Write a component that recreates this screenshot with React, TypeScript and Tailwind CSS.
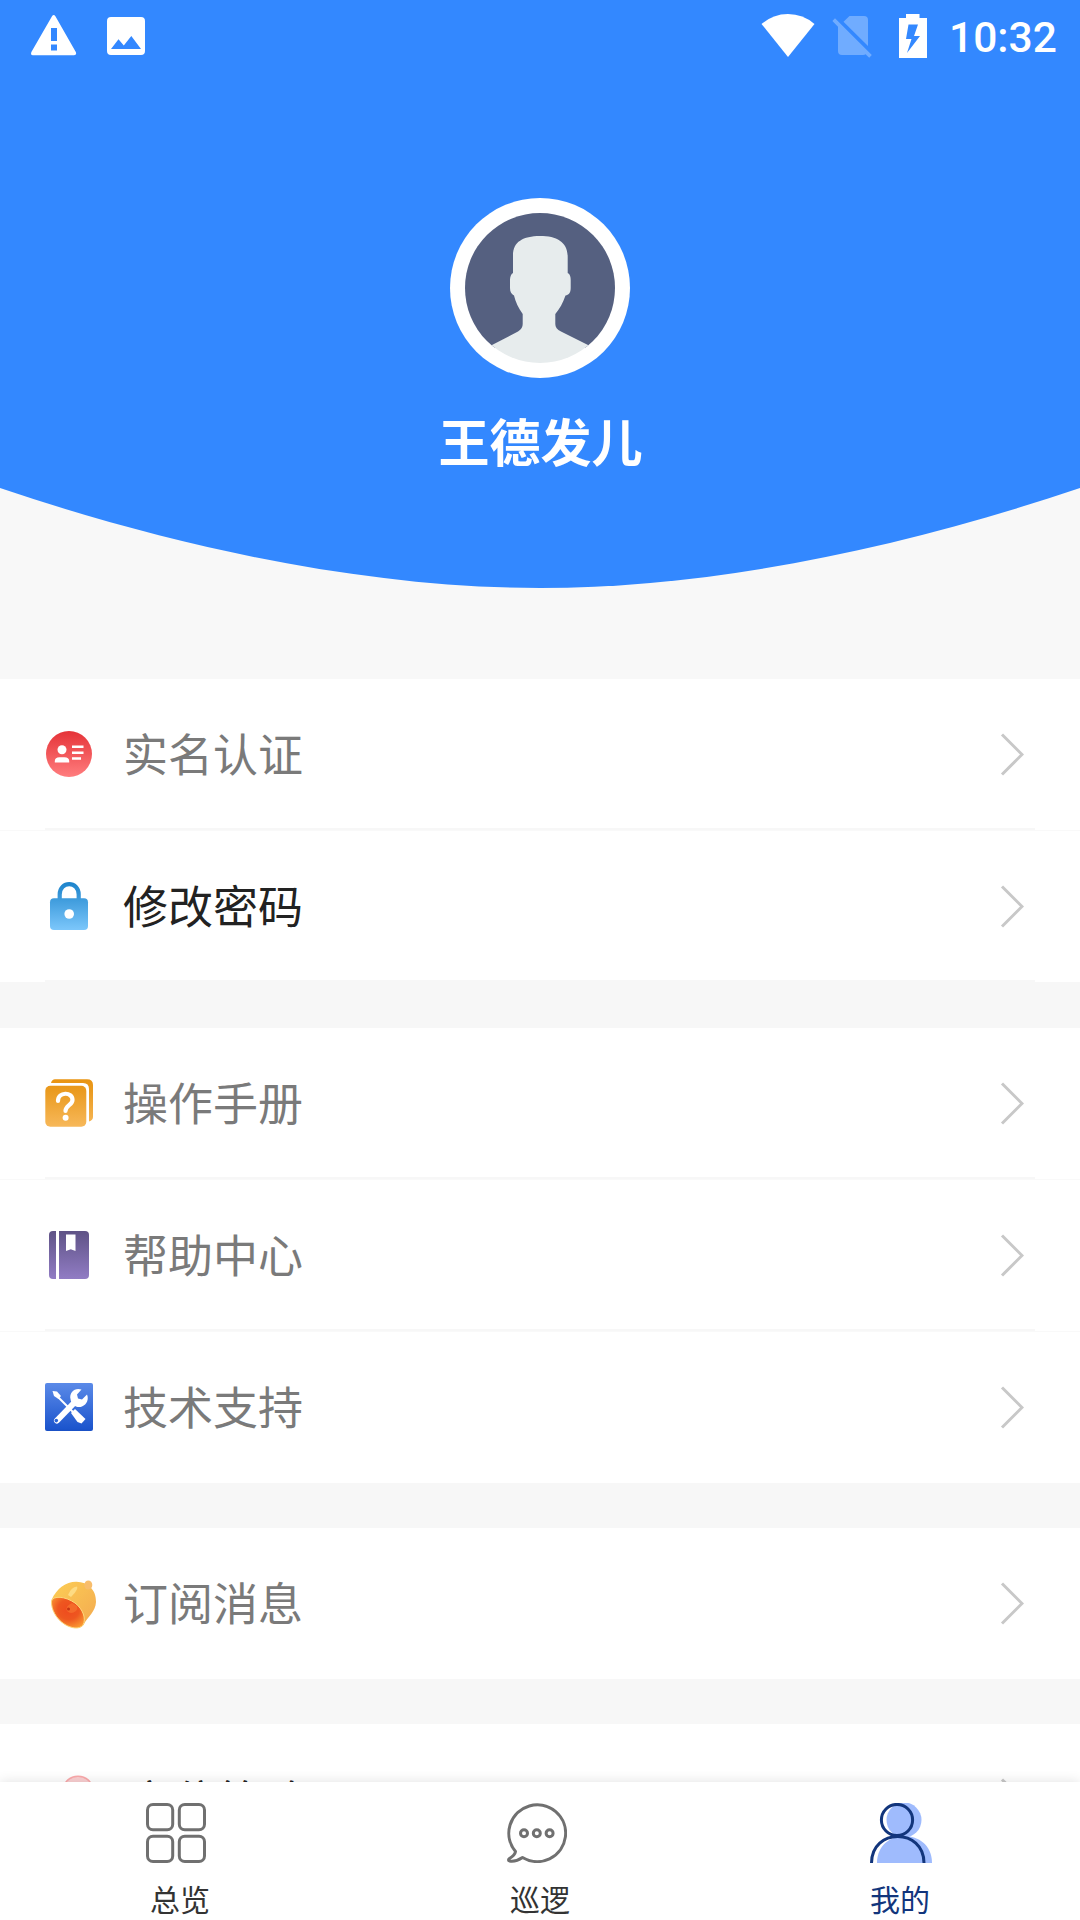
import { ReactNode } from "react"
import clsx from "clsx"

interface MenuItem {
  label: string
  icon: ReactNode
  active?: boolean
  divider?: "full" | "inner"
  shifted?: boolean
}

function StatusBar() {
  return (
    <div className="h-[72px] flex items-start text-white">
      <svg className="ml-[30px] mt-[14px] w-[48px] h-[42px]" viewBox="0 0 48 42">
        <path
          fillRule="evenodd"
          fill="#fff"
          d="M22 2.2Q23.7-.2 25.4 2.2L45.8 38Q47 41.2 44 41.2H3Q.2 41.2 1.4 38ZM21 14V27H27V14ZM21 30.5V36.5H27V30.5Z"
        />
      </svg>
      <svg className="ml-[29px] mt-[17px] w-[38px] h-[38px]" viewBox="0 0 38 38">
        <path
          fillRule="evenodd"
          fill="#fff"
          d="M4 0H34Q38 0 38 4V34Q38 38 34 38H4Q0 38 0 34V4Q0 0 4 0ZM4 32H34L24.3 19L16.8 28.5L11.5 22.3Z"
        />
      </svg>
      <svg className="ml-auto mt-[14px] w-[54px] h-[43px]" viewBox="0 0 54 43">
        <path fill="#fff" d="M.5 10Q12 0 27 0T53.5 10L27 43Z" />
      </svg>
      <svg className="ml-[17px] mt-[16px] w-[41px] h-[43px]" viewBox="0 0 41 43">
        <path
          fill="#fff"
          fillOpacity=".3"
          d="M17.5 0H32Q36 0 36 4V30L11.5 5.8ZM3 2.2L39.8 39L37.2 41.8L33.6 38.3Q33 39 31 39H10Q6 39 6 35V10.8L.4 5Z"
        />
      </svg>
      <svg className="ml-[26px] mt-[14px] w-[28px] h-[44px]" viewBox="0 0 28 44">
        <path
          fillRule="evenodd"
          fill="#fff"
          d="M7 0H20.5V4H28V44H0V4H7ZM9.5 10.5L7 25H12.5L8 39L21 22H15L19 10.5Z"
        />
      </svg>
      <span className="ml-[22px] mr-[24px] mt-[12px] w-[107px] whitespace-nowrap font-[Roboto] text-[42.5px] leading-[52px] font-medium">
        10:32
      </span>
    </div>
  )
}

function Avatar() {
  return (
    <svg className="w-[180px] h-[180px]" viewBox="0 0 180 180">
      <clipPath id="avatar-clip">
        <circle cx="90" cy="90" r="75" />
      </clipPath>
      <circle cx="90" cy="90" r="90" fill="#fff" />
      <g clipPath="url(#avatar-clip)">
        <rect width="180" height="150" fill="#556080" />
        <path
          fill="#e7eced"
          d="M90 38C107 38 117.7 44 117.7 59V75C120 76 120.7 79 120.7 82V90C120.7 95 118.5 97 115.5 97.5C113 105 109.5 111 105.3 116V126C105.3 129 107 131.5 111 133.5L138 147L150 170H30L42 147L68 133.5C71.5 131 72.7 129 72.7 126V116C68.5 110 65.5 104 64 97.5C61.5 96 60 94 60 90V82C60 79 61 76 63 75V57C63 44 73 38 90 38Z"
        />
      </g>
    </svg>
  )
}

function Chevron() {
  return (
    <svg className="w-[24px] h-[46px] ml-auto mr-[11px]" viewBox="0 0 24 46" fill="none">
      <path d="M2 3.5L22 23.5L2 43.5" stroke="#c8c8c8" strokeWidth="3" />
    </svg>
  )
}

/* Menu icons, all drawn on a 48px grid */

function IdIcon() {
  return (
    <svg className="size-12" viewBox="0 0 48 48">
      <linearGradient id="id-fill" x2="0" y2="1">
        <stop stopColor="#e53338" />
        <stop offset="1" stopColor="#ff7d7e" />
      </linearGradient>
      <circle cx="24" cy="24" r="23" fill="url(#id-fill)" />
      <g fill="#fff">
        <circle cx="17" cy="19.8" r="4.5" />
        <path d="M9.8 32.5V31Q10 27.3 14.5 27.3H19.5Q24 27.3 24.2 31V32.5Z" />
        <path d="M27 15.5H38.5V18H27ZM27 21.5H38.5V24H27ZM27 27.2H36V29.8H27Z" />
      </g>
    </svg>
  )
}

function LockIcon() {
  return (
    <svg className="size-12" viewBox="0 0 48 48">
      <linearGradient id="lock-fill" gradientUnits="userSpaceOnUse" x1="0" y1="0" x2="0" y2="48">
        <stop stopColor="#1c83cb" />
        <stop offset="1" stopColor="#7cc7fb" />
      </linearGradient>
      <path
        d="M14.7 18V12.5C14.7-1.3 33.7-1.3 33.7 12.5V18"
        fill="none"
        stroke="url(#lock-fill)"
        strokeWidth="4.2"
      />
      <rect x="5" y="16.3" width="38" height="31.7" rx="4" fill="url(#lock-fill)" />
      <circle cx="24.2" cy="32" r="4.8" fill="#fff" />
    </svg>
  )
}

function ManualIcon() {
  return (
    <svg className="size-12" viewBox="0 0 48 48">
      <linearGradient id="manual-fill" gradientUnits="userSpaceOnUse" x1="0" y1="0" x2="0" y2="48">
        <stop stopColor="#e99412" />
        <stop offset=".25" stopColor="#ea9b20" />
        <stop offset="1" stopColor="#f7b85a" />
      </linearGradient>
      <path
        d="M6 4Q7 .3 10 .3H42Q48 .3 48 6V38Q48 41 44 42.5V10Q44 4 38 4Z"
        fill="url(#manual-fill)"
      />
      <rect x=".3" y="6.7" width="41" height="41" rx="5" fill="url(#manual-fill)" />
      <path
        d="M13 22C13 12.5 27.5 12.5 27.5 21C27.5 26 20.5 26.5 20.5 32"
        fill="none"
        stroke="#fff"
        strokeWidth="4.2"
        strokeLinecap="round"
      />
      <circle cx="20.6" cy="38.8" r="3" fill="#fff" />
    </svg>
  )
}

function BookIcon() {
  return (
    <svg className="size-12" viewBox="0 0 48 48">
      <linearGradient id="book-fill" x2="0" y2="1">
        <stop stopColor="#5f5386" />
        <stop offset="1" stopColor="#917cc4" />
      </linearGradient>
      <rect x="4" y="0" width="40" height="48" rx="4" fill="url(#book-fill)" />
      <path d="M11 0H14V48H11Z" fill="#fff" />
      <path d="M21 3.5H30.5V20L25.8 18.2L21 20Z" fill="#fff" />
    </svg>
  )
}

function ToolsIcon() {
  return (
    <svg className="size-12" viewBox="0 0 48 48">
      <linearGradient id="tools-fill" x2="0" y2="1">
        <stop stopColor="#5b8ae8" />
        <stop offset=".95" stopColor="#1c55cd" />
        <stop offset="1" stopColor="#1a50c4" />
      </linearGradient>
      <rect width="48" height="48" rx="2" fill="url(#tools-fill)" />
      <g stroke="#fff" strokeLinecap="round">
        <path d="M13 14L29 30" strokeWidth="2" />
        <path d="M12 37.5L29 20" strokeWidth="6" />
      </g>
      <path d="M7.5 8L12 8.5L16 13L13.5 16L9 13Z" fill="#fff" />
      <path d="M26 30L30 26L40.5 36L36.5 40.5L32.5 39Z" fill="#fff" />
      <path
        d="M36.5 6.5C30 4 24 9.5 25.5 16C26 22 32 25.5 37 23.5C42 21.5 44 16 42 11.5L37 16.5L33 15.5L32 11.5Z"
        fill="#fff"
      />
      <circle cx="11.3" cy="37.6" r="1.8" fill="#2863d6" />
    </svg>
  )
}

function BellIcon() {
  return (
    <svg className="size-12 overflow-visible" viewBox="0 0 48 48">
      <linearGradient id="bell-body" x2="1" y2="1">
        <stop stopColor="#fcce55" />
        <stop offset="1" stopColor="#f3a950" />
      </linearGradient>
      <radialGradient id="bell-mouth" cx=".52" cy=".4" r=".65">
        <stop stopColor="#ee4a1e" />
        <stop offset=".5" stopColor="#ee5720" />
        <stop offset="1" stopColor="#fa9a32" />
      </radialGradient>
      <path
        d="M6.5 21C12 9 21 2.5 31.5 2.7C43 3 51.5 11 51 23C50.5 33 43 37 38.5 46C36 49 33 49 30 48Z"
        fill="url(#bell-body)"
      />
      <ellipse cx="43.3" cy="6" rx="4" ry="4.5" fill="#f8bd6c" />
      <path
        d="M6.5 22C8 16.5 20 17 30 24C38 30 41.5 40 38 46C34 51 26 49 20 45.5C11 40 6 30 6.5 22Z"
        fill="url(#bell-mouth)"
        stroke="#fdd77c"
        strokeWidth="1"
      />
      <path d="M23 16Q26 8 32 7.5Q34 10 26 18Z" fill="#fddb83" />
      <path d="M27 24Q20 27 22 32Q26 36 31 32Q33 30 32 27Z" fill="#f46a2a" />
      <circle cx="23.5" cy="30" r="1.5" fill="#c63313" />
    </svg>
  )
}

function PinIcon() {
  return (
    <svg className="size-12" viewBox="0 0 48 48">
      <path
        d="M24 46C18 38 9 28 9 17C9-4 39-4 39 17C39 28 30 38 24 46Z"
        fill="#fbd0d2"
        stroke="#faa9ab"
        strokeWidth="1.6"
      />
      <circle cx="25" cy="16" r="6" fill="#fff" />
    </svg>
  )
}

const groups: MenuItem[][] = [
  [
    { label: "实名认证", icon: <IdIcon />, divider: "full" },
    { label: "修改密码", icon: <LockIcon />, active: true, divider: "inner" },
  ],
  [
    { label: "操作手册", icon: <ManualIcon />, divider: "full" },
    { label: "帮助中心", icon: <BookIcon />, divider: "full" },
    { label: "技术支持", icon: <ToolsIcon /> },
  ],
  [{ label: "订阅消息", icon: <BellIcon /> }],
  [{ label: "定位策略", icon: <PinIcon />, active: true, shifted: true }],
]

function MenuRow({ label, icon, active, divider, shifted }: MenuItem) {
  return (
    <div
      className={clsx(
        "px-[45px] bg-white shrink-0",
        divider === "full" ? "h-[152px] border-b border-[#f9f9f9]" : "h-[151px]",
      )}
    >
      <div
        className={clsx(
          "h-full flex items-center",
          divider ? "border-b-2 border-[#f7f7f7] pt-px" : "pb-px",
        )}
      >
        <div className={clsx(shifted && "ml-[9px] mr-[-4px]")}>{icon}</div>
        <span
          className={clsx(
            "ml-[30px] text-[45px] leading-[60px]",
            active ? "text-[#222]" : "text-[#7a7a7a]",
            shifted ? "pt-0.5" : "pb-0.5",
          )}
        >
          {label}
        </span>
        <Chevron />
      </div>
    </div>
  )
}

/* Bottom tabs */

function GridIcon() {
  return (
    <svg className="w-[60px] h-[60px]" viewBox="0 0 60 60" fill="none" stroke="#707070" strokeWidth="3">
      <rect x="1.5" y="1.5" width="25.2" height="25.2" rx="5.5" />
      <rect x="33.3" y="1.5" width="25.2" height="25.2" rx="5.5" />
      <rect x="1.5" y="33.3" width="25.2" height="25.2" rx="5.5" />
      <rect x="33.3" y="33.3" width="25.2" height="25.2" rx="5.5" />
    </svg>
  )
}

function ChatIcon() {
  return (
    <svg className="w-[60px] h-[60px]" viewBox="0 0 60 60" fill="none" stroke="#707070" strokeWidth="3">
      <path
        d="M8.5 48.5A28.4 28.4 0 1 1 15.5 54.5Q9 59 2.5 58Q.5 57 2.5 55.5Q8 52 8.5 48.5Z"
        strokeLinejoin="round"
      />
      <circle cx="17" cy="30.3" r="3.5" />
      <circle cx="29.8" cy="30.3" r="3.5" />
      <circle cx="42.6" cy="30.3" r="3.5" />
    </svg>
  )
}

function UserIcon() {
  return (
    <svg className="w-[62px] h-[60px]" viewBox="0 0 62 60">
      <circle cx="34" cy="17" r="17.5" fill="#9fbbfd" />
      <path d="M7 60C7 24 62 24 62 60Z" fill="#9fbbfd" />
      <g fill="none" stroke="#12357c" strokeWidth="3">
        <circle cx="27" cy="17" r="15.6" />
        <path d="M1.5 60C1.5 24.5 54 24.5 54 60" />
      </g>
    </svg>
  )
}

const tabs = [
  { label: "总览", icon: <GridIcon />, offset: "-ml-[9px]", color: "text-[#333]" },
  { label: "巡逻", icon: <ChatIcon />, offset: "-ml-[6px]", color: "text-[#333]" },
  { label: "我的", icon: <UserIcon />, offset: "ml-[2px]", color: "text-[#12357c]" },
]

export default function App() {
  return (
    <div className="w-[1080px] h-[1920px] flex flex-col overflow-hidden bg-[#f7f7f7] font-['Noto_Sans_CJK_SC',sans-serif]">
      <main className="flex-1 min-h-0 overflow-hidden flex flex-col">
        {/* Profile header */}
        <header className="h-[488px] shrink-0 bg-[#3388ff]">
          <StatusBar />
          <div className="pt-[126px] flex flex-col items-center">
            <Avatar />
            <h1 className="mt-[27px] ml-px text-[51px] leading-[70px] font-bold text-white">
              王德发儿
            </h1>
          </div>
        </header>
        <div className="h-[191px] shrink-0 bg-[#f8f8f8]">
          <svg className="w-[1080px] h-[100px]" viewBox="0 0 1080 100">
            <path d="M0 0C180 61 370 100 540 100S900 61 1080 0Z" fill="#3388ff" />
          </svg>
        </div>

        {/* Menu */}
        <div className="flex flex-col gap-[45px]">
          {groups.map((items, i) => (
            <section key={items[0].label} className={clsx("flex flex-col", i === 0 && "mb-px")}>
              {items.map((item) => (
                <MenuRow key={item.label} {...item} />
              ))}
            </section>
          ))}
        </div>
      </main>

      <nav className="relative h-[138px] shrink-0 flex bg-white shadow-[0_0_12px_rgba(0,0,0,0.12)]">
        {tabs.map(({ label, icon, offset, color }) => (
          <div key={label} className="flex-1 flex flex-col items-center pt-[21px]">
            <div className={offset}>{icon}</div>
            <span className={clsx("mt-[17px] text-[30px] leading-[36px]", color)}>{label}</span>
          </div>
        ))}
      </nav>
    </div>
  )
}
